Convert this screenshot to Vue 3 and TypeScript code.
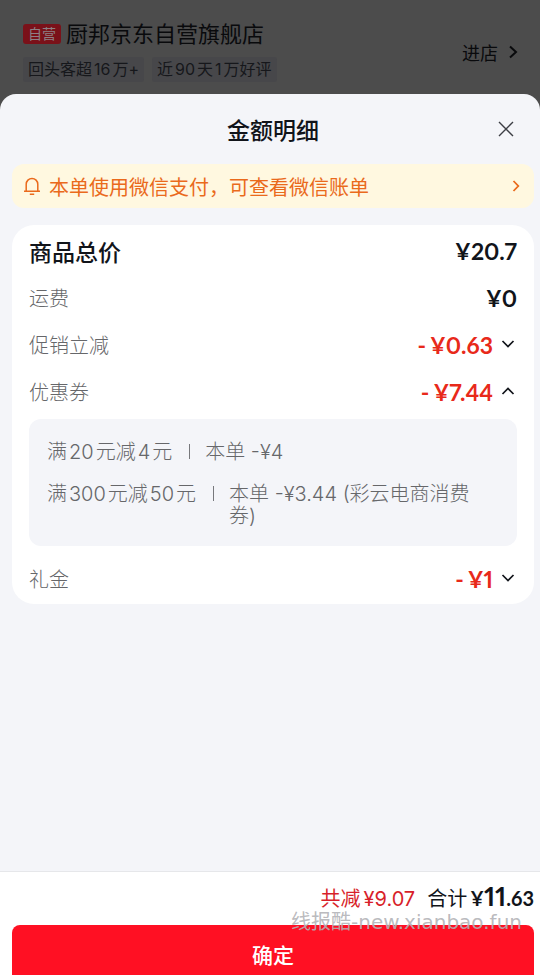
<script setup lang="ts">
import { reactive, ref } from 'vue'

interface Coupon {
  rule: string
  amount: string
}

interface Line {
  label: string
  value: string
  kind: 'total' | 'plain' | 'discount'
  open?: boolean
  coupons?: Coupon[]
}

const visible = ref(true)

const tags = ['回头客超16万+', '近90天1万好评']

const lines = reactive<Line[]>([
  { label: '商品总价', value: '¥20.7', kind: 'total' },
  { label: '运费', value: '¥0', kind: 'plain' },
  { label: '促销立减', value: '¥0.63', kind: 'discount', open: false },
  {
    label: '优惠券',
    value: '¥7.44',
    kind: 'discount',
    open: true,
    coupons: [
      { rule: '满20元减4元', amount: '本单 -¥4' },
      { rule: '满300元减50元', amount: '本单 -¥3.44 (彩云电商消费券)' },
    ],
  },
  { label: '礼金', value: '¥1', kind: 'discount', open: false },
])

// Splits mixed text so that the numbers get a little air beside the Chinese characters
function parts(text: string): string[] {
  return text.split(/(\d+)/).filter(Boolean)
}

function isNumber(text: string): boolean {
  return /^\d+$/.test(text)
}
</script>

<template>
  <div class="page">
    <header class="shop">
      <div class="shop-info">
        <div class="shop-name">
          <span class="badge">自营</span>
          <h2>厨邦京东自营旗舰店</h2>
        </div>
        <div class="tags">
          <span v-for="tag in tags" :key="tag" class="tag"><span
            v-for="(part, i) in parts(tag)" :key="i" :class="{ num: isNumber(part) }">{{ part }}</span></span>
        </div>
      </div>
      <a class="enter" href="#">
        进店
        <svg width="10" height="16" viewBox="0 0 10 16" aria-hidden="true">
          <path d="M2 2.5 8 8 2 13.5" fill="none" stroke="currentColor" stroke-width="2" />
        </svg>
      </a>
    </header>

    <section v-if="visible" class="sheet">
      <div class="sheet-head">
        <h1>金额明细</h1>
        <button class="close" type="button" aria-label="关闭" @click="visible = false">
          <svg width="16" height="16" viewBox="0 0 16 16" aria-hidden="true">
            <path d="M1 1 15 15M15 1 1 15" fill="none" stroke="currentColor" stroke-width="1.4" />
          </svg>
        </button>
      </div>

      <a class="notice" href="#">
        <svg width="18" height="20" viewBox="0 0 18 20" aria-hidden="true">
          <path d="M3.2 15V8.2a5.8 5.8 0 0 1 11.6 0V15M1 15.2h16M6.8 18.2h4.4" fill="none" stroke="currentColor" stroke-width="1.5" />
        </svg>
        <span class="notice-text">本单使用微信支付，可查看微信账单</span>
        <svg width="8" height="14" viewBox="0 0 8 14" aria-hidden="true">
          <path d="M1.5 2 6.3 7 1.5 12" fill="none" stroke="currentColor" stroke-width="1.8" />
        </svg>
      </a>

      <div class="card">
        <template v-for="line in lines" :key="line.label">
          <div class="row" :class="line.kind">
            <span class="label">{{ line.label }}</span>
            <span v-if="line.open === undefined" class="value">{{ line.value }}</span>
            <button v-else class="value toggle" type="button" :aria-expanded="line.open" @click="line.open = !line.open">
              <span><span class="minus">-</span>{{ line.value }}</span>
              <svg width="14" height="10" viewBox="0 0 14 10" aria-hidden="true">
                <path :d="line.open ? 'M1.5 7 7 1.5 12.5 7' : 'M1.5 1 7 6.5 12.5 1'" fill="none" stroke="currentColor" stroke-width="1.7" />
              </svg>
            </button>
          </div>
          <ul v-if="line.open && line.coupons" class="coupons">
            <li v-for="coupon in line.coupons" :key="coupon.rule">
              <span class="rule"><span
                v-for="(part, i) in parts(coupon.rule)" :key="i" :class="{ num: isNumber(part) }">{{ part }}</span></span>
              <i class="bar"></i>
              <span class="amount">{{ coupon.amount }}</span>
            </li>
          </ul>
        </template>
      </div>

      <footer class="footer">
        <div class="summary">
          <span class="saved">共减<span class="saved-num">¥9.07</span></span>
          <span class="sum">合计<strong><span class="yen">¥</span><span class="whole">11</span><span class="cents">.63</span></strong></span>
        </div>
        <button class="confirm" type="button" @click="visible = false">确定</button>
        <span class="watermark">线报酷<span class="site">-new.xianbao.fun</span></span>
      </footer>
    </section>
  </div>
</template>

<style>
body {
  margin: 0;
  background: #4c4c4c;
}
</style>

<style scoped>
.page {
  display: flex;
  flex-direction: column;
  min-height: 100vh;
  overflow: hidden;
  font-family: Inter, "Noto Sans CJK SC", sans-serif;
  font-size: 20px;
  color: #11141a;
}

h1,
h2,
ul {
  margin: 0;
  padding: 0;
}

button {
  border: 0;
  padding: 0;
  background: none;
  font: inherit;
  color: inherit;
  cursor: pointer;
}

a {
  color: inherit;
  text-decoration: none;
}

svg {
  display: block;
  flex: none;
}

.num {
  margin: 0 2px;
}

.shop {
  display: flex;
  align-items: center;
  justify-content: space-between;
  box-sizing: border-box;
  height: 94px;
  padding: 10px 22px 0 23px;
  color: #090a0c;
}

.shop-info {
  display: flex;
  flex-direction: column;
  gap: 10px;
  padding-bottom: 2px;
}

.shop-name {
  display: flex;
  align-items: center;
  gap: 5px;
}

.badge {
  padding: 0 5px;
  border-radius: 3px;
  background: #7a1119;
  color: #8c8084;
  font-size: 14px;
  line-height: 20px;
}

h2 {
  font-size: 22px;
  font-weight: 400;
  line-height: 26px;
}

.tags {
  display: flex;
  gap: 8px;
}

.tag {
  padding: 0 5px;
  border-radius: 3px;
  background: #47474a;
  color: #16171b;
  font-size: 16px;
  line-height: 25px;
}

.enter {
  display: flex;
  align-items: center;
  gap: 10px;
  font-size: 18px;
}

.sheet {
  display: flex;
  flex: 1;
  flex-direction: column;
  border-radius: 16px 16px 0 0;
  background: #f4f5f9;
}

.sheet-head {
  display: grid;
  grid-template-columns: 1fr auto 1fr;
  align-items: center;
  height: 70px;
  padding: 0 26px 0 32px;
}

h1 {
  grid-column: 2;
  font-size: 23px;
  font-weight: 500;
}

.close {
  justify-self: end;
  color: #3c3e44;
}

.notice {
  display: flex;
  align-items: center;
  gap: 8px;
  height: 44px;
  margin: 0 6px 17px 12px;
  padding: 0 14px 0 11px;
  border-radius: 12px;
  background: #fff8e0;
  color: #ea6a1c;
}

.notice-text {
  flex: 1;
}

.card {
  margin: 0 6px 0 12px;
  padding: 2px 17px 2px;
  border-radius: 22px;
  background: #fff;
}

.row {
  display: flex;
  align-items: center;
  justify-content: space-between;
  height: 47px;
}

.label {
  color: #66676a;
  font-weight: 300;
}

.total .label {
  color: #11141a;
  font-size: 23px;
  font-weight: 500;
}

.value {
  font-family: Lato, "Noto Sans CJK SC", sans-serif;
  font-size: 23px;
  font-weight: 700;
  font-variant-numeric: proportional-nums;
}

.toggle {
  display: flex;
  align-items: center;
  gap: 8px;
  padding-right: 2px;
  color: #e8291a;
}

.toggle svg {
  color: #11141a;
}

.minus {
  margin-right: 4px;
}

.coupons {
  display: flex;
  flex-direction: column;
  gap: 20px;
  margin: 4px 0 9px;
  padding: 22px 34px 19px 18px;
  border-radius: 12px;
  background: #f4f5f9;
  color: #66676a;
  font-weight: 300;
  line-height: 22px;
}

.coupons li {
  display: flex;
}

.rule {
  white-space: nowrap;
}

.bar {
  flex: none;
  width: 1px;
  height: 15px;
  margin: 3px 15px 3px 17px;
  background: #77787c;
}

.footer {
  position: relative;
  margin-top: auto;
  padding: 0 6px 0 12px;
  border-top: 1px solid #e6e7ea;
  background: #fff;
}

.summary {
  display: flex;
  align-items: baseline;
  justify-content: flex-end;
  gap: 12px;
  box-sizing: border-box;
  height: 53px;
  padding-top: 8px;
}

.saved {
  color: #d81f2a;
}

.saved-num {
  margin-left: 3px;
}

.sum {
  line-height: 32px;
}

strong {
  margin-left: 3px;
  font-family: Lato, sans-serif;
  font-weight: 700;
  font-variant-numeric: proportional-nums;
}

.whole {
  font-size: 27px;
}

.confirm {
  display: block;
  width: 100%;
  height: 50px;
  padding-top: 8px;
  border-radius: 8px 8px 0 0;
  background: #ff1023;
  color: #fff;
  font-size: 21px;
  font-weight: 500;
}

.watermark {
  position: absolute;
  top: 36px;
  right: 18px;
  color: rgba(178, 178, 182, 0.9);
  line-height: 28px;
  pointer-events: none;
}

.site {
  font-family: "DejaVu Sans", sans-serif;
}
</style>
